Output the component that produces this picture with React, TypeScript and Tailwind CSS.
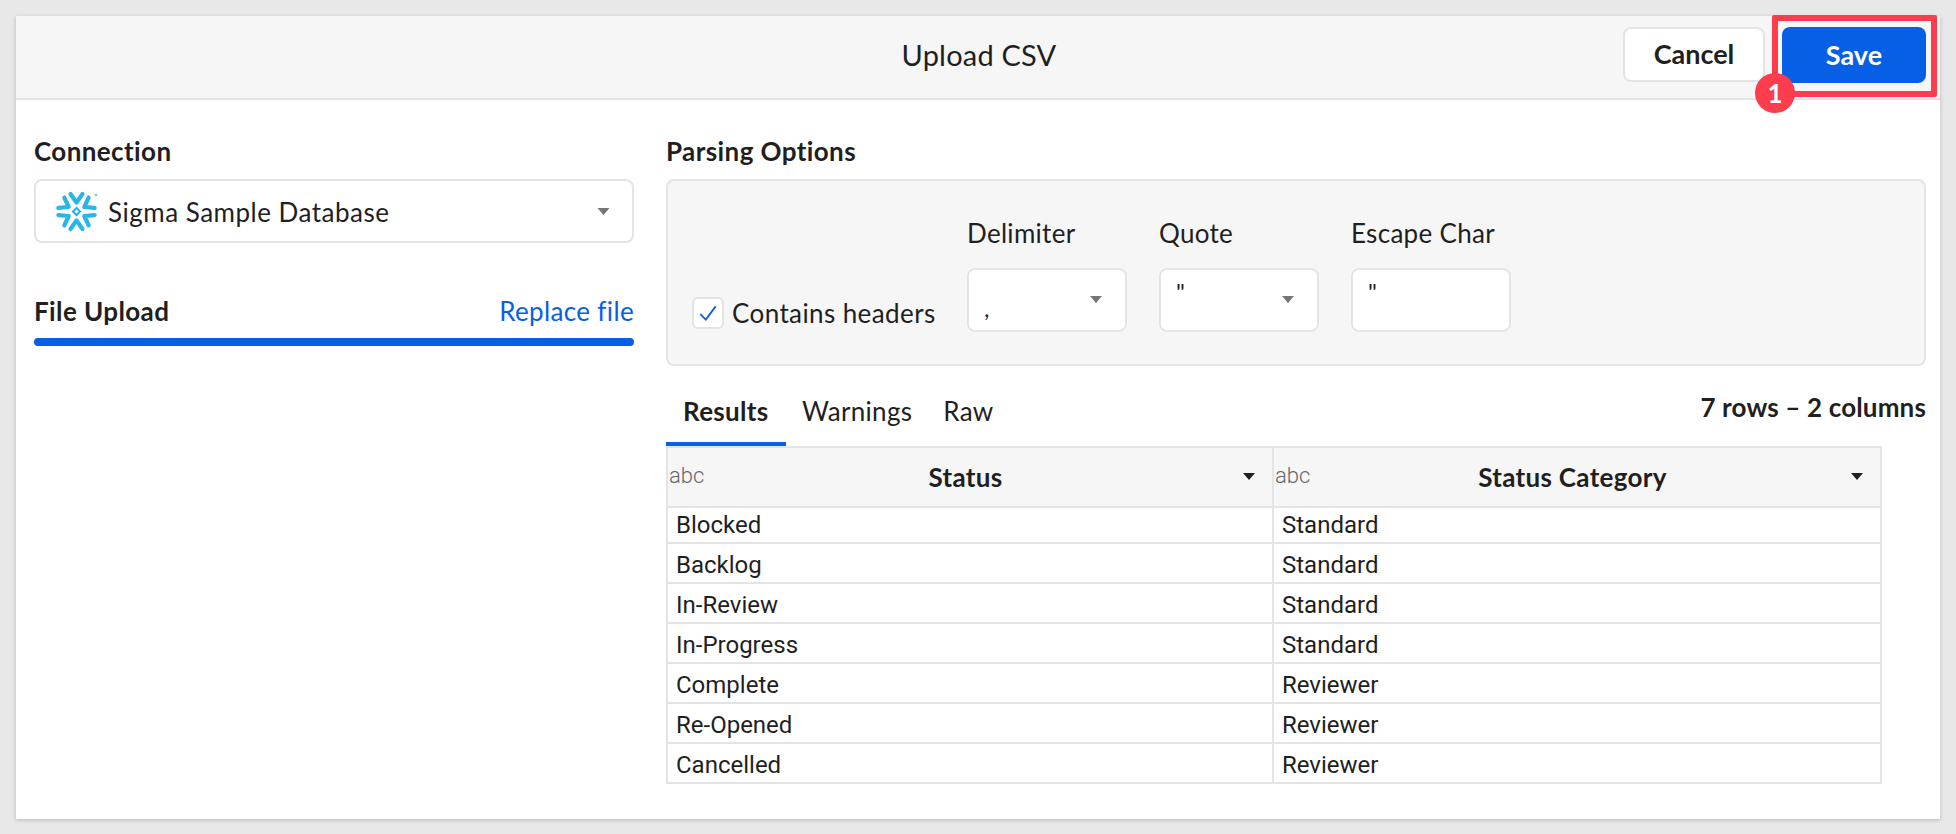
import React from "react";

const Caret = ({ className = "" }: { className?: string }) => (
  <svg viewBox="0 0 12 7" className={className} aria-hidden="true">
    <path d="M0 0H12L6 7Z" fill="currentColor" />
  </svg>
);

const Snowflake = () => (
  <svg viewBox="0 0 42 41" className="h-[41px] w-[42px] shrink-0" aria-hidden="true">
    <g fill="none" stroke="#29b5e8" strokeWidth="4.2" strokeLinecap="round" strokeLinejoin="round">
      {[0, 60, 120, 180, 240, 300].map((a) => (
        <path key={a} d="M14.5 3 L20.5 11.5 L26.5 3" transform={`rotate(${a} 20.5 20.5)`} />
      ))}
    </g>
    <path d="M20.5 15.5 L25.5 20.5 L20.5 25.5 L15.5 20.5Z M20.5 18.5 L18.5 20.5 L20.5 22.5 L22.5 20.5Z" fill="#29b5e8" fillRule="evenodd" />
    <circle cx="40" cy="4" r="1.3" fill="#29b5e8" opacity="0.7" />
  </svg>
);

const Sel = ({ value, low }: { value: string; low?: boolean }) => (
  <div className="relative h-[64px] w-[160px] rounded-[8px] border-2 border-[#e4e4e4] bg-white">
    <span className={low ? "absolute left-[15px] top-[22px] text-[24px] leading-[32px]" : "absolute left-[15px] top-[6px] text-[24px] leading-[32px]"}>{value}</span>
    <Caret className="absolute left-[121px] top-[26px] h-[7px] w-[12px] text-[#757575]" />
  </div>
);

const Field = ({ label, children }: { label: string; children: React.ReactNode }) => (
  <div className="flex flex-col">
    <div className="mb-[19px] text-[26px] leading-[32px] tracking-[0.3px]">{label}</div>
    {children}
  </div>
);

const rows = [
  ["Blocked", "Standard"],
  ["Backlog", "Standard"],
  ["In-Review", "Standard"],
  ["In-Progress", "Standard"],
  ["Complete", "Reviewer"],
  ["Re-Opened", "Reviewer"],
  ["Cancelled", "Reviewer"],
];

const HeadCell = ({ name, className }: { name: string; className: string }) => (
  <div className={`relative flex h-full items-center justify-center ${className}`}>
    <span className="absolute left-[1px] top-[14px] font-['Roboto',sans-serif] text-[22px] font-light leading-[28px] text-[#666666]">abc</span>
    <span className="pr-[9px] text-[26px] font-bold leading-[32px] tracking-[0.3px]">{name}</span>
    <Caret className="absolute right-[16px] top-[25px] h-[7px] w-[14px] text-[#1f1f1f]" />
  </div>
);

export default function App() {
  return (
    <div className="h-[834px] w-full bg-[#e8e8e8] p-4 font-['Lato',sans-serif] text-[#1f1f1f]">
      <div className="relative h-[803px] w-[1924px] bg-white shadow-[0_1px_4px_rgba(0,0,0,0.22)]">
        <header className="grid h-[84px] grid-cols-[1fr_auto_1fr] items-center border-b-2 border-[#e4e4e4] bg-[#f6f6f6] pr-[14px]">
          <div />
          <h1 className="pb-[5px] pl-[16px] text-[29px] font-normal leading-[36px] tracking-[0.2px]">Upload CSV</h1>
          <div className="flex items-start justify-end gap-[17px] pb-[4px]">
            <button className="h-[55px] w-[142px] rounded-[8px] border-2 border-[#e4e4e4] bg-white text-[27px] font-bold">Cancel</button>
            <button className="h-[56px] w-[144px] rounded-[8px] bg-[#075fe6] text-[27px] font-bold text-white">Save</button>
          </div>
        </header>

        <div className="flex gap-[32px] pl-[18px] pr-[14px]">
          <section className="w-[600px] pt-[35px]">
            <div className="text-[26px] font-bold leading-[32px] tracking-[0.4px]">Connection</div>
            <div className="mt-[12px] flex h-[64px] items-center rounded-[8px] border-2 border-[#e4e4e4] bg-white pl-[20px] pr-[22px]">
              <Snowflake />
              <span className="ml-[10px] flex-1 pt-[2px] text-[26px] leading-[32px] tracking-[0.5px]">Sigma Sample Database</span>
              <Caret className="h-[7px] w-[13px] text-[#757575]" />
            </div>
            <div className="mt-[52px] flex items-center justify-between">
              <span className="text-[26px] font-bold leading-[32px] tracking-[0.4px]">File Upload</span>
              <span className="text-[26px] leading-[32px] tracking-[0.35px] text-[#075fe6]">Replace file</span>
            </div>
            <div className="mt-[11px] h-[8px] rounded-full bg-[#075fe6]" />
          </section>

          <section className="w-[1260px] pt-[35px]">
            <div className="text-[26px] font-bold leading-[32px] tracking-[0.4px]">Parsing Options</div>
            <div className="mt-[12px] flex h-[187px] items-end rounded-[8px] border-2 border-[#e4e4e4] bg-[#f6f6f6] pb-[32px] pl-[24px]">
              <label className="mb-[3px] flex w-[275px] items-center">
                <span className="flex h-[32px] w-[32px] items-center justify-center rounded-[6px] border-2 border-[#e4e4e4] bg-white">
                  <svg viewBox="0 0 20 20" className="h-[22px] w-[22px]" fill="none" stroke="#075fe6" strokeWidth="1.6" aria-hidden="true">
                    <path d="M3 11 L8 16 L17 4" />
                  </svg>
                </span>
                <span className="ml-[8px] text-[26px] leading-[32px] tracking-[0.4px]">Contains headers</span>
              </label>
              <div className="flex gap-[32px]">
                <Field label="Delimiter"><Sel value="," low /></Field>
                <Field label="Quote"><Sel value={'"'} /></Field>
                <Field label="Escape Char">
                  <div className="relative h-[64px] w-[160px] rounded-[8px] border-2 border-[#e4e4e4] bg-white">
                    <span className="absolute left-[15px] top-[6px] text-[24px] leading-[32px]">"</span>
                  </div>
                </Field>
              </div>
            </div>

            <div className="mt-[10px] flex items-start justify-between">
              <div className="flex text-[26px] leading-[32px] tracking-[0.3px]">
                <span className="w-[120px] border-b-4 border-[#075fe6] pb-[15px] pl-[17px] pt-[19px] font-bold">Results</span>
                <span className="pb-[15px] pl-[16px] pr-[15px] pt-[19px]">Warnings</span>
                <span className="pb-[15px] pl-[16px] pr-[16px] pt-[19px]">Raw</span>
              </div>
              <span className="pt-[15px] text-[26px] font-bold leading-[32px] tracking-[0.15px]">7 rows – 2 columns</span>
            </div>

            <div className="w-[1216px] border-2 border-[#e4e4e4]">
              <div className="flex h-[60px] border-b-2 border-[#e4e4e4] bg-[#f6f6f6]">
                <HeadCell name="Status" className="w-[606px] border-r-2 border-[#e4e4e4]" />
                <HeadCell name="Status Category" className="flex-1" />
              </div>
              {rows.map(([a, b], i) => (
                <div key={a} className={i === 0 ? "flex h-[36px] border-b-2 border-[#e4e4e4] font-['Roboto',sans-serif] text-[24px] leading-[34px]" : i === 6 ? "flex h-[38px] font-['Roboto',sans-serif] text-[24px] leading-[34px]" : "flex h-[40px] border-b-2 border-[#e4e4e4] font-['Roboto',sans-serif] text-[24px] leading-[34px]"}>
                  <div className={i === 0 ? "w-[606px] border-r-2 border-[#e4e4e4] pl-[8px]" : "w-[606px] border-r-2 border-[#e4e4e4] pl-[8px] pt-[4px]"}>{a}</div>
                  <div className={i === 0 ? "flex-1 pl-[8px]" : "flex-1 pl-[8px] pt-[4px]"}>{b}</div>
                </div>
              ))}
            </div>
          </section>
        </div>

        <div className="pointer-events-none absolute left-[1756px] top-[-1px] h-[82px] w-[165px] rounded-[2px] border-[6px] border-[#fb3d4e]" />
        <div className="absolute left-[1739px] top-[57px] flex h-[40px] w-[40px] items-center justify-center rounded-full bg-[#fb3d4e] text-[26px] font-bold text-white">1</div>
      </div>
    </div>
  );
}
